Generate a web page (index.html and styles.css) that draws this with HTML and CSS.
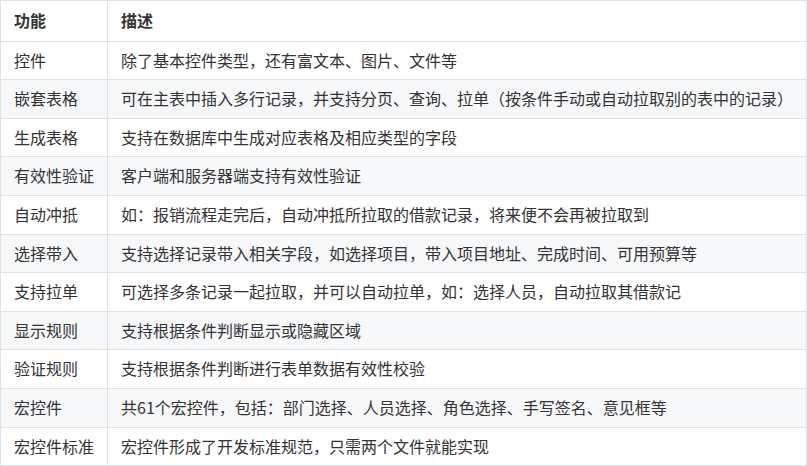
FILE: index.html
```html
<!DOCTYPE html>
<html lang="zh-CN">
<head>
<meta charset="utf-8">
<link rel="stylesheet" href="styles.css">
</head>
<body>
<table class="feature-table">
  <thead>
    <tr><th class="col-name">功能</th><th>描述</th></tr>
  </thead>
  <tbody>
    <tr><td>控件</td><td>除了基本控件类型，还有富文本、图片、文件等</td></tr>
    <tr><td>嵌套表格</td><td>可在主表中插入多行记录，并支持分页、查询、拉单（按条件手动或自动拉取别的表中的记录）</td></tr>
    <tr><td>生成表格</td><td>支持在数据库中生成对应表格及相应类型的字段</td></tr>
    <tr><td>有效性验证</td><td>客户端和服务器端支持有效性验证</td></tr>
    <tr><td>自动冲抵</td><td>如：报销流程走完后，自动冲抵所拉取的借款记录，将来便不会再被拉取到</td></tr>
    <tr><td>选择带入</td><td>支持选择记录带入相关字段，如选择项目，带入项目地址、完成时间、可用预算等</td></tr>
    <tr><td>支持拉单</td><td>可选择多条记录一起拉取，并可以自动拉单，如：选择人员，自动拉取其借款记</td></tr>
    <tr><td>显示规则</td><td>支持根据条件判断显示或隐藏区域</td></tr>
    <tr><td>验证规则</td><td>支持根据条件判断进行表单数据有效性校验</td></tr>
    <tr><td>宏控件</td><td>共61个宏控件，包括：部门选择、人员选择、角色选择、手写签名、意见框等</td></tr>
    <tr><td>宏控件标准</td><td>宏控件形成了开发标准规范，只需两个文件就能实现</td></tr>
  </tbody>
</table>
</body>
</html>
```

FILE: styles.css
```css
html, body {
  margin: 0;
  padding: 0;
  background: #ffffff;
}

body {
  font-family: "Noto Sans CJK SC", "Noto Sans", "Liberation Sans", sans-serif;
  font-size: 16px;
  line-height: 1.6;
  color: #333333;
}

.feature-table {
  border-collapse: collapse;
  width: 807px;
}

.feature-table th,
.feature-table td {
  border: 1px solid #dfe2e5;
  padding: 6px 13px;
  text-align: left;
  vertical-align: middle;
  white-space: nowrap;
}

.feature-table th {
  font-weight: bold;
  color: #333333;
  padding-top: 7px;
  padding-bottom: 7px;
}

.feature-table .col-name {
  width: 79px;
}

.feature-table tbody tr:nth-child(2n) {
  background: #f6f8fa;
}
```
